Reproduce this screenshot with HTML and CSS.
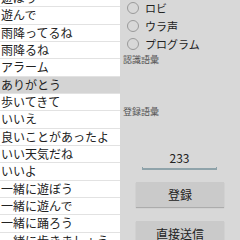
FILE: index.html
```html
<!DOCTYPE html>
<html lang="ja">

<head>
    <meta charset="UTF-8">
    <meta name="viewport" content="width=device-width, initial-scale=1.0">
    <title>語彙登録</title>
    <link rel="stylesheet" href="styles.css">
</head>

<body>
    <div class="screen">
        <div class="list">
            <div class="rows">
                <div class="row">遊ぼう</div>
                <div class="row">遊んで</div>
                <div class="row">雨降ってるね</div>
                <div class="row">雨降るね</div>
                <div class="row">アラーム</div>
                <div class="row selected">ありがとう</div>
                <div class="row">歩いてきて</div>
                <div class="row">いいえ</div>
                <div class="row">良いことがあったよ</div>
                <div class="row">いい天気だね</div>
                <div class="row">いいよ</div>
                <div class="row">一緒に遊ぼう</div>
                <div class="row">一緒に遊んで</div>
                <div class="row">一緒に踊ろう</div>
                <div class="row">一緒に歩きましょう</div>
            </div>
        </div>
        <div class="panel">
            <div class="radios">
                <label class="radio"><span class="circle"></span>ロビ</label>
                <label class="radio"><span class="circle"></span>ウラ声</label>
                <label class="radio"><span class="circle"></span>プログラム</label>
            </div>
            <div class="caption">認識語彙</div>
            <div class="caption second">登録語彙</div>
            <div class="field">
                <div class="value">233</div>
                <div class="underline"></div>
            </div>
            <button class="btn">登録</button>
            <button class="btn">直接送信</button>
        </div>
    </div>
</body>

</html>
```

FILE: styles.css
```css
body {
    margin: 0;
    font-family: "Noto Sans CJK JP", "Noto Sans", sans-serif;
    background: #d8d8d8;
}

.screen {
    display: flex;
    width: 240px;
    height: 240px;
    overflow: hidden;
}

.list {
    width: 120px;
    height: 240px;
    background: #fff;
    overflow: hidden;
}

.rows {
    margin-top: -10px;
}

.row {
    height: 16.33px;
    line-height: 16.33px;
    border-bottom: 1px solid #e2e2e2;
    font-size: 12px;
    color: #222;
    padding-left: 1px;
    white-space: nowrap;
}

.selected {
    background: #d4d4d4;
}

.panel {
    width: 120px;
    display: flex;
    flex-direction: column;
    align-items: stretch;
}

.radios {
    display: flex;
    flex-direction: column;
    margin-top: -1px;
}

.radio {
    display: flex;
    align-items: center;
    height: 18px;
    font-size: 11px;
    color: #222;
    padding-left: 7px;
}

.circle {
    width: 10px;
    height: 10px;
    border: 1px solid #9a9a9a;
    border-radius: 50%;
    margin-right: 6px;
}

.caption {
    font-size: 9px;
    color: #555;
    padding-left: 3px;
    height: 12px;
    line-height: 12px;
    margin-top: 1px;
}

.second {
    margin-top: 40px;
}

.field {
    margin: 32px 23px 0 22px;
    display: flex;
    flex-direction: column;
    align-items: center;
}

.value {
    font-size: 12px;
    color: #222;
    line-height: 16px;
}

.underline {
    align-self: stretch;
    height: 3px;
    margin-top: 1px;
    border: 1px solid #8fa3aa;
    border-top: none;
    border-bottom-width: 2px;
    box-sizing: border-box;
}

.btn {
    margin: 12px 16px 0 16px;
    height: 25px;
    border: none;
    background: #cacaca;
    box-shadow: 0 1px 1px rgba(0, 0, 0, 0.2);
    font-family: inherit;
    font-size: 12px;
    color: #222;
    padding: 0;
    flex-shrink: 0;
}

.btn + .btn {
    margin-top: 14px;
}
```
